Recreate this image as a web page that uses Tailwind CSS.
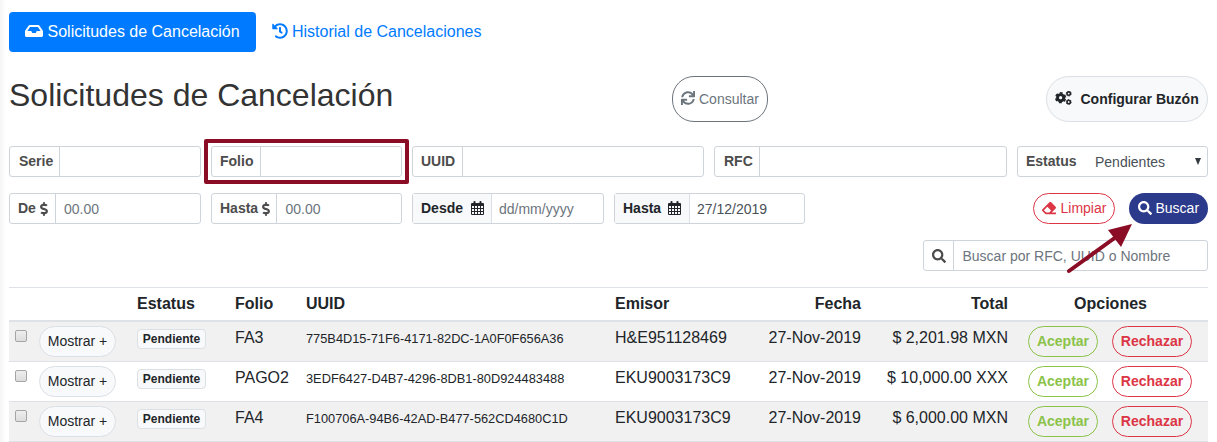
<!DOCTYPE html>
<html lang="es">
<head>
<meta charset="utf-8">
<title>Solicitudes de Cancelación</title>
<script src="https://cdn.jsdelivr.net/npm/@tailwindcss/browser@4"></script>
</head>
<body class="relative h-[442px] w-[1217px] overflow-hidden bg-white bg-linear-to-r from-[#f5f5f5] from-0% to-white to-[6px] font-['Liberation_Sans',Arial,sans-serif] text-[#212529]">
<svg class="hidden">
  <symbol id="inbox" viewBox="0 0 576 512"><path d="M567.938 243.908L462.25 85.374A48.003 48.003 0 0 0 422.311 64H153.689a48 48 0 0 0-39.938 21.374L8.062 243.908A47.994 47.994 0 0 0 0 270.533V400c0 26.51 21.49 48 48 48h480c26.51 0 48-21.49 48-48V270.533a47.994 47.994 0 0 0-8.062-26.625zM162.252 128h251.497l85.333 128H376l-32 64H232l-32-64H76.918l85.334-128z"/></symbol>
  <symbol id="history" viewBox="0 0 512 512"><path d="M504 255.531c.253 136.64-111.18 248.372-247.82 248.468-59.015.042-113.223-20.53-155.822-54.911-11.077-8.94-11.905-25.541-1.839-35.607l11.267-11.267c8.609-8.609 22.353-9.551 31.891-1.984C173.062 425.135 212.781 440 256 440c101.705 0 184-82.311 184-184 0-101.705-82.311-184-184-184-48.814 0-93.149 18.969-126.068 49.932l50.754 50.754c10.08 10.08 2.941 27.314-11.313 27.314H24c-8.837 0-16-7.163-16-16V38.627c0-14.254 17.234-21.393 27.314-11.314l49.372 49.372C129.209 34.136 189.552 8 256 8c136.81 0 247.747 110.78 248 247.531zm-180.912 78.784l9.823-12.63c8.138-10.463 6.253-25.542-4.21-33.679L288 256.349V152c0-13.255-10.745-24-24-24h-16c-13.255 0-24 10.745-24 24v135.651l65.409 50.874c10.463 8.137 25.541 6.253 33.679-4.21z"/></symbol>
  <symbol id="sync" viewBox="0 0 512 512"><path d="M440.65 12.57l4 82.77A247.16 247.16 0 0 0 255.83 8C134.73 8 33.91 94.92 12.29 209.82A12 12 0 0 0 24.09 224h49.05a12 12 0 0 0 11.67-9.26 175.91 175.91 0 0 1 317-56.94l-101.46-4.86a12 12 0 0 0-12.57 12v47.41a12 12 0 0 0 12 12H500a12 12 0 0 0 12-12V12a12 12 0 0 0-12-12h-47.37a12 12 0 0 0-11.98 12.57zM255.83 432a175.61 175.61 0 0 1-146-77.8l101.8 4.87a12 12 0 0 0 12.57-12v-47.4a12 12 0 0 0-12-12H12a12 12 0 0 0-12 12V500a12 12 0 0 0 12 12h47.35a12 12 0 0 0 12-12.6l-4.15-82.57A247.17 247.17 0 0 0 255.83 504c121.11 0 221.93-86.92 243.55-201.82a12 12 0 0 0-11.8-14.18h-49.05a12 12 0 0 0-11.67 9.26A175.86 175.86 0 0 1 255.83 432z"/></symbol>
  <symbol id="search" viewBox="0 0 512 512"><path d="M505 442.7L405.3 343c-4.5-4.5-10.6-7-17-7H372c27.6-35.3 44-79.7 44-128C416 93.1 322.9 0 208 0S0 93.1 0 208s93.1 208 208 208c48.3 0 92.7-16.4 128-44v16.3c0 6.4 2.5 12.5 7 17l99.7 99.7c9.4 9.4 24.6 9.4 33.9 0l28.3-28.3c9.4-9.4 9.4-24.6.1-34zM208 336c-70.7 0-128-57.2-128-128 0-70.7 57.2-128 128-128 70.7 0 128 57.2 128 128 0 70.7-57.2 128-128 128z"/></symbol>
  <symbol id="eraser" viewBox="0 0 512 512"><path d="M497.941 273.941c18.745-18.745 18.745-49.137 0-67.882l-160-160c-18.745-18.745-49.136-18.746-67.883 0l-256 256c-18.745 18.745-18.745 49.137 0 67.882l96 96A48.004 48.004 0 0 0 144 480h356c6.627 0 12-5.373 12-12v-40c0-6.627-5.373-12-12-12H355.883l142.058-142.059zm-302.627-62.627l137.373 137.373L265.373 416H150.628l-80-80 124.686-124.686z"/></symbol>
  <symbol id="dollar" viewBox="0 0 288 512"><path d="M209.2 233.4l-108-31.6C88.7 198.2 80 186.5 80 173.5c0-16.3 13.2-29.5 29.5-29.5h66.3c12.2 0 24.2 3.7 34.2 10.5 6.1 4.1 14.3 3.1 19.5-2l34.8-34c7.1-6.9 6.1-18.4-1.8-24.5C238 74.8 207.4 64.1 176 64V16c0-8.8-7.2-16-16-16h-32c-8.8 0-16 7.2-16 16v48h-2.5C45.8 64-5.4 118.7.5 183.6c4.2 46.1 39.4 83.6 83.8 96.6l102.5 30c12.5 3.7 21.2 15.3 21.2 28.3 0 16.3-13.2 29.5-29.5 29.5h-66.3C100 368 88 364.3 78 357.5c-6.1-4.1-14.3-3.1-19.5 2l-34.8 34c-7.1 6.9-6.1 18.4 1.8 24.5 24.5 19.2 55.1 29.9 86.5 30v48c0 8.8 7.2 16 16 16h32c8.8 0 16-7.2 16-16v-48.2c46.6-.9 90.3-28.6 105.7-72.7 21.5-61.6-14.6-124.8-72.5-141.7z"/></symbol>
  <symbol id="calendar" viewBox="0 0 13 14"><path fill-rule="evenodd" d="M1 2h1.5V.8a.8.8 0 0 1 .8-.8h.4a.8.8 0 0 1 .8.8V2h4V.8a.8.8 0 0 1 .8-.8h.4a.8.8 0 0 1 .8.8V2H12a1 1 0 0 1 1 1v10a1 1 0 0 1-1 1H1a1 1 0 0 1-1-1V3a1 1 0 0 1 1-1zM1 5v2h2V5zm3 0v2h2V5zm3 0v2h2V5zm3 0v2h2V5zM1 8v2h2V8zm3 0v2h2V8zm3 0v2h2V8zm3 0v2h2V8zM1 11v2h2v-2zm3 0v2h2v-2zm3 0v2h2v-2zm3 0v2h2v-2z"/></symbol>
  <symbol id="cogs" viewBox="0 0 17 14"><g fill="none" stroke="currentColor"><circle cx="5.6" cy="6.7" r="3.1" stroke-width="2.9"/><circle cx="5.6" cy="6.7" r="4.8" stroke-width="1.6" stroke-dasharray="2.9 2.126" stroke-dashoffset="-1.1"/><circle cx="13.7" cy="2.6" r="1.7" stroke-width="1.6"/><circle cx="13.7" cy="2.6" r="2.5" stroke-width=".9" stroke-dasharray="1.31 1.31"/><circle cx="13.7" cy="11" r="1.7" stroke-width="1.6"/><circle cx="13.7" cy="11" r="2.5" stroke-width=".9" stroke-dasharray="1.31 1.31"/></g></symbol>
</svg>

<main class="ml-[9px] flex w-[1199px] flex-col whitespace-nowrap pt-3">
  <nav class="flex h-10">
    <a class="flex w-[247px] items-center gap-[4.5px] rounded bg-[#007bff] pl-4 text-white"><svg class="-mt-[2px] h-4 w-[18px] shrink-0 fill-current"><use href="#inbox"/></svg>Solicitudes de Cancelación</a>
    <a class="flex items-center gap-1 pl-4 text-[#007bff]"><svg class="-mt-[2px] h-4 w-4 shrink-0 fill-current"><use href="#history"/></svg>Historial de Cancelaciones</a>
  </nav>

  <header class="mt-6 flex h-[46px]">
    <h1 class="w-[663px] text-[32px] leading-[38px] text-[#333]">Solicitudes de Cancelación</h1>
    <button class="flex w-24 items-center gap-1 rounded-[22px] border border-[#6c757d] pl-2 text-sm text-[#6c757d]"><svg class="-mt-[2px] h-[14px] w-[14px] fill-current"><use href="#sync"/></svg>Consultar</button>
    <button class="ml-auto flex w-[162px] items-center rounded-[23px] border border-[#dae0e5] bg-[#f8f9fa] pl-2 text-sm font-bold"><svg class="mr-[8.5px] -mt-[2px] h-[14px] w-[17px]"><use href="#cogs"/></svg>Configurar Buzón</button>
  </header>

  <section class="mt-6 flex h-[31px] text-sm text-[#495057]">
    <div class="flex w-48 rounded-[3px] border border-[#ced4da]"><b class="w-[50px] border-r border-[#ced4da] pl-[9px] leading-[29px] text-[#4c4c4c]">Serie</b></div>
    <div class="relative ml-[10px] flex w-[191px] rounded-[3px] border border-[#ced4da]"><b class="w-[49px] border-r border-[#ced4da] pl-2 leading-[29px] text-[#4c4c4c]">Folio</b><div class="absolute -top-2 -left-2 h-[45px] w-[205px] rounded-[2px] border-4 border-[#8b0d25]"></div></div>
    <div class="ml-[10px] flex w-[292px] rounded-[3px] border border-[#ced4da]"><b class="w-[50px] border-r border-[#ced4da] pl-2 leading-[29px] text-[#4c4c4c]">UUID</b></div>
    <div class="ml-[10px] flex w-[293px] rounded-[3px] border border-[#ced4da]"><b class="w-[45px] border-r border-[#ced4da] pl-[9px] leading-[29px] text-[#4c4c4c]">RFC</b></div>
    <div class="ml-[10px] flex w-[191px] rounded-[3px] border border-[#ced4da] leading-[29px]"><b class="w-[77px] pl-2 text-[#4c4c4c]">Estatus</b><span class="pt-px">Pendientes</span><svg class="mt-[11px] mr-[6px] ml-auto h-[7px] w-[6px] fill-[#343a40]" viewBox="0 0 6 7"><path d="M0 0h6L3 7z"/></svg></div>
  </section>

  <section class="mt-4 flex h-[31px] text-sm leading-[29px] text-[#495057]">
    <div class="flex w-48 rounded-[3px] border border-[#ced4da]"><b class="flex w-[46px] items-center gap-1 border-r border-[#ced4da] pl-2 text-[#4c4c4c]">De<svg class="h-[14px] w-2 fill-current"><use href="#dollar"/></svg></b><span class="pt-px pl-2 text-[#6c757d]">00.00</span></div>
    <div class="ml-[10px] flex w-[191px] rounded-[3px] border border-[#ced4da]"><b class="flex w-[65px] items-center gap-1 border-r border-[#ced4da] pl-2 text-[#4c4c4c]">Hasta<svg class="h-[14px] w-2 fill-current"><use href="#dollar"/></svg></b><span class="pt-px pl-[8.5px] text-[#6c757d]">00.00</span></div>
    <div class="ml-[10px] flex w-48 rounded-[3px] border border-[#ced4da]"><b class="flex w-[79px] items-center gap-2 border-r border-[#dae0e5] bg-[#f8f9fa] pl-2 text-[#212529]">Desde<svg class="-mt-[2px] h-[14px] w-[13px] fill-current"><use href="#calendar"/></svg></b><span class="pt-px pl-[7px] text-[#6c757d]">dd/mm/yyyy</span></div>
    <div class="ml-[10px] flex w-[191px] rounded-[3px] border border-[#ced4da]"><b class="flex w-[75px] items-center gap-[7px] border-r border-[#dae0e5] bg-[#f8f9fa] pl-2 text-[#212529]">Hasta<svg class="-mt-[2px] h-[14px] w-[13px] fill-current"><use href="#calendar"/></svg></b><span class="pt-px pl-[7px]">27/12/2019</span></div>
    <button class="ml-auto flex w-[82px] items-center gap-[4.5px] rounded-full border border-[#dc3545] pl-2 text-[#dc3545]"><svg class="-mt-px h-[14px] w-[14px] fill-current"><use href="#eraser"/></svg>Limpiar</button>
    <button class="ml-[14px] flex w-[79px] items-center gap-[3.5px] rounded-full bg-[#2c3a8c] pl-[9px] text-white"><svg class="-mt-px h-[14px] w-[14px] fill-current"><use href="#search"/></svg>Buscar</button>
  </section>

  <div class="mt-4 ml-auto flex h-[31px] w-[285px] rounded-[3px] border border-[#ced4da] text-sm leading-[30px]">
    <span class="flex w-[30px] items-center border-r border-[#ced4da] pl-2 text-[#4c4c4c]"><svg class="h-[14px] w-[14px] fill-current"><use href="#search"/></svg></span>
    <span class="pl-[8.5px] text-[#6c757d]">Buscar por RFC, UUID o Nombre</span>
  </div>

  <table class="mt-4 w-[1199px] table-fixed border-separate border-spacing-0 text-base leading-6">
    <colgroup><col class="w-[30px]"><col class="w-[97px]"><col class="w-[99px]"><col class="w-[71px]"><col class="w-[309px]"><col class="w-[126px]"><col class="w-[120px]"><col class="w-[147px]"><col class="w-[200px]"></colgroup>
    <thead><tr class="h-[35px] text-left align-top *:border-t *:border-b-2 *:border-[#dee2e6] *:pt-1">
      <th></th><th></th><th class="pl-px">Estatus</th><th>Folio</th><th>UUID</th><th>Emisor</th><th class="text-right">Fecha</th><th class="text-right">Total</th><th class="pl-[5px] text-center">Opciones</th>
    </tr></thead>
    <tbody id="rows"></tbody>
  </table>
</main>

<svg class="absolute top-[220px] left-[1060px] h-[56px] w-[76px]" viewBox="0 0 76 56"><path d="M9 51L56 17" stroke="#8b0d25" stroke-width="4" stroke-linecap="round"/><path d="M72 4L48 10l13 17z" fill="#8b0d25"/></svg>

<script>
const rows = [
  ['FA3', '775B4D15-71F6-4171-82DC-1A0F0F656A36', 'H&amp;E951128469', '$ 2,201.98 MXN'],
  ['PAGO2', '3EDF6427-D4B7-4296-8DB1-80D924483488', 'EKU9003173C9', '$ 10,000.00 XXX'],
  ['FA4', 'F100706A-94B6-42AD-B477-562CD4680C1D', 'EKU9003173C9', '$ 6,000.00 MXN']
];
document.getElementById('rows').innerHTML = rows.map(([folio, uuid, emisor, total]) => `
<tr class="h-10 align-top odd:bg-[#f1f1f1] *:border-b *:border-[#dee2e6]">
  <td class="pt-2 pl-[6px]"><span class="block h-3 w-3 rounded-[2px] border border-[#a5a5a5] bg-linear-to-b from-[#eeeeee] to-[#dddddd]"></span></td>
  <td class="pt-1"><button class="block h-[31px] w-[77px] rounded-full border border-[#dae0e5] bg-[#f8f9fa] text-sm leading-[29px]">Mostrar +</button></td>
  <td class="pt-[7px] pl-px"><span class="block h-5 w-[69px] rounded border border-[#dae0e5] bg-[#f8f9fa] text-center text-xs leading-[18px] font-bold">Pendiente</span></td>
  <td class="pt-1">${folio}</td>
  <td class="pt-1"><span class="text-[12.8px]">${uuid}</span></td>
  <td class="pt-1">${emisor}</td>
  <td class="pt-1 text-right">27-Nov-2019</td>
  <td class="pt-1 text-right">${total}</td>
  <td class="pt-1 pl-5"><div class="flex gap-[14px] text-sm leading-[29px] font-bold"><button class="h-[31px] w-[70px] rounded-full border border-[#8bc34a] text-[#8bc34a]">Aceptar</button><button class="h-[31px] w-20 rounded-full border border-[#dc3545] text-[#dc3545]">Rechazar</button></div></td>
</tr>`).join('');
</script>
</body>
</html>
